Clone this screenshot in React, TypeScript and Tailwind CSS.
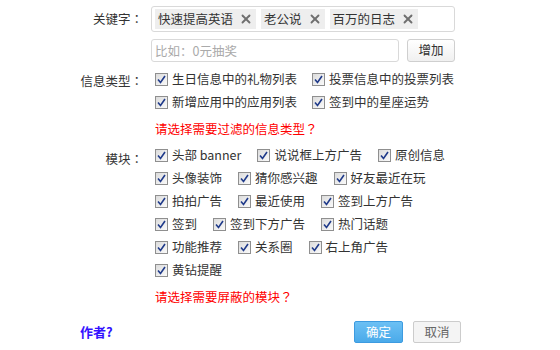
import React from 'react';
import { X } from 'lucide-react';

const keywords = ['快速提高英语', '老公说', '百万的日志'];

const infoRows = [
  ['生日信息中的礼物列表', '投票信息中的投票列表'],
  ['新增应用中的应用列表', '签到中的星座运势'],
];

const moduleRows = [
  ['头部 banner', '说说框上方广告', '原创信息'],
  ['头像装饰', '猜你感兴趣', '好友最近在玩'],
  ['拍拍广告', '最近使用', '签到上方广告'],
  ['签到', '签到下方广告', '热门话题'],
  ['功能推荐', '关系圈', '右上角广告'],
  ['黄钻提醒'],
];

// full-width punctuation centered in its cell, like the original page
const Punct: React.FC<{ c: string }> = ({ c }) => (
  <span className="font-['Noto_Sans_CJK_TC',sans-serif]">{c}</span>
);

const CheckBox: React.FC = () => (
  <span className="w-[13px] h-[13px] border border-[#8f8f8f] bg-gradient-to-br from-[#dcdcdc] to-[#fafafa] flex items-center justify-center shrink-0">
    <svg width="9" height="9" viewBox="0 0 9 9">
      <path d="M1 4.5 L3.5 7.5 L8 1" fill="none" stroke="#1f3a8a" strokeWidth="1.6" />
    </svg>
  </span>
);

const CheckItem: React.FC<{ label: string }> = ({ label }) => (
  <label className="flex items-center gap-[4px] h-[23px] whitespace-nowrap">
    <CheckBox />
    <span>{label}</span>
  </label>
);

const App: React.FC = () => {
  return (
    <div className="w-[560px] h-[350px] bg-white text-[12.5px] text-[#333] font-['Noto_Sans_CJK_SC',sans-serif] pt-[6px]">
      {/* Keywords */}
      <div className="flex">
        <div className="w-[143px] text-right leading-[26px]">
          关键字<Punct c="：" />
        </div>
        <div className="ml-[8px] w-[304px]">
          <div className="h-[26px] border border-[#d9d9d9] rounded-[3px] flex items-center gap-[5px] px-[3px]">
            {keywords.map((k) => (
              <span key={k} className="h-[20px] bg-[#eeeeee] flex items-center pl-[3px] pr-[3px] gap-[6px]">
                <span>{k}</span>
                <X className="w-[14px] h-[14px] text-[#6f6f6f]" strokeWidth={3.2} />
              </span>
            ))}
          </div>
          <div className="flex mt-[7px] gap-[8px]">
            <input
              className="w-[248px] h-[23px] border border-[#d9d9d9] rounded-[3px] px-[3px] outline-none placeholder:text-[#aaa]"
              placeholder="比如：0元抽奖"
            />
            <button className="w-[48px] h-[23px] border border-[#cfcfcf] rounded-[3px] bg-gradient-to-b from-white to-[#f0f0f0] text-[#333]">
              增加
            </button>
          </div>
        </div>
      </div>

      {/* Info types */}
      <div className="flex mt-[6px]">
        <div className="w-[143px] text-right leading-[26px]">
          信息类型<Punct c="：" />
        </div>
        <div className="ml-[8px] pl-[4px]">
          {infoRows.map((row, i) => (
            <div key={i} className="flex gap-[15px]">
              {row.map((l) => (
                <CheckItem key={l} label={l} />
              ))}
            </div>
          ))}
          <div className="text-[#ff0000] leading-[22px] mt-[4px]">
            请选择需要过滤的信息类型<Punct c="？" />
          </div>
        </div>
      </div>

      {/* Modules */}
      <div className="flex mt-[4px]">
        <div className="w-[143px] text-right leading-[30px]">
          模块<Punct c="：" />
        </div>
        <div className="ml-[8px] pl-[4px]">
          {moduleRows.map((row, i) => (
            <div key={i} className="flex gap-[16px]">
              {row.map((l) => (
                <CheckItem key={l} label={l} />
              ))}
            </div>
          ))}
          <div className="text-[#ff0000] leading-[22px] mt-[4px]">
            请选择需要屏蔽的模块<Punct c="？" />
          </div>
        </div>
      </div>

      {/* Footer */}
      <div className="flex items-center mt-[13px] pl-[80px] pr-[99px]">
        <a className="text-[#3311ff] font-bold text-[13px] cursor-pointer">作者?</a>
        <div className="ml-auto flex gap-[10px]">
          <button className="w-[49px] h-[22px] rounded-[2px] border border-[#3d9be0] bg-gradient-to-b from-[#6cc0f4] to-[#4aaaea] text-white">
            确定
          </button>
          <button className="w-[48px] h-[22px] rounded-[2px] border border-[#cccccc] bg-[#f4f4f4] text-[#666]">
            取消
          </button>
        </div>
      </div>
    </div>
  );
};

export default App;
